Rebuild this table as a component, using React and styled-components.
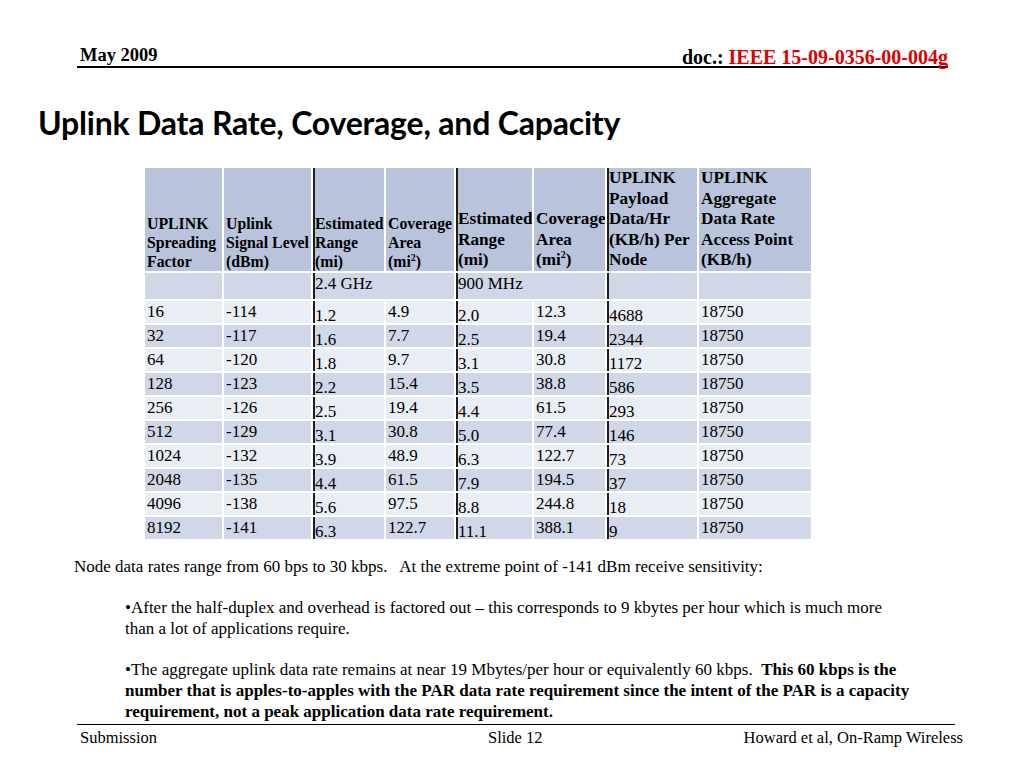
import React from 'react';
import styled, { createGlobalStyle } from 'styled-components';

const GlobalStyle = createGlobalStyle`
  html, body {
    margin: 0;
    padding: 0;
    background: #ffffff;
  }
  body {
    font-family: "Liberation Serif", "Times New Roman", serif;
    color: #000;
  }
`;

const Slide = styled.div`
  width: 1024px;
  height: 768px;
  display: flex;
  flex-direction: column;
  background: #fff;
  overflow: hidden;
`;

const Header = styled.header`
  margin: 0 76px 0 77px;
  padding-top: 40px;
  height: 26px;
  display: flex;
  justify-content: space-between;
  align-items: flex-end;
  border-bottom: 2px solid #000;
  font-weight: bold;
  line-height: 20px;
`;

const HeaderDate = styled.div`
  font-size: 18.5px;
  margin-left: 3px;
  margin-bottom: 1px;
`;

const DocId = styled.div`
  font-size: 20px;
  margin-bottom: -1px;
`;

const Red = styled.span`
  color: #e00000;
`;

const Title = styled.h1`
  margin: 37px 0 0 38px;
  font-family: Lato, "Open Sans", sans-serif;
  font-weight: bold;
  font-size: 32px;
  line-height: 36px;
  letter-spacing: -0.2px;
`;

const Table = styled.table`
  margin: 25px 0 0 143px;
  border-collapse: separate;
  border-spacing: 2px;
  table-layout: fixed;
  width: 670px;
  font-size: 17px;
  line-height: 18px;
`;

const HeadCell = styled.th`
  height: 101px;
  padding: 0 0 0 2px;
  text-align: left;
  vertical-align: bottom;
  white-space: nowrap;
  background: #b9c4dc;
  font-size: ${(p) => (p.$big ? '17.2px' : '15.8px')};
  line-height: ${(p) => (p.$big ? '20.5px' : '19px')};
  box-shadow: ${(p) => (p.$bar ? 'inset 2px 0 0 #1e1e1e' : 'none')};
  overflow: hidden;
`;

const Sup = styled.sup`
  font-size: 10px;
  line-height: 0;
`;

const FreqCell = styled.td`
  height: 26px;
  box-sizing: border-box;
  padding: 2px 0 0 2px;
  vertical-align: top;
  background: #d0d8e8;
  box-shadow: ${(p) => (p.$bar ? 'inset 2px 0 0 #1e1e1e' : 'none')};
`;

const Cell = styled.td`
  height: 22px;
  box-sizing: border-box;
  padding: 2px 0 0 2px;
  vertical-align: top;
  background: ${(p) => (p.$dark ? '#d0d8e8' : '#e9edf4')};
  box-shadow: ${(p) => (p.$bar ? 'inset 2px 0 0 #1e1e1e' : 'none')};
  white-space: nowrap;
`;

const Lowered = styled.span`
  position: relative;
  top: 4px;
`;

const Notes = styled.div`
  margin-top: 15px;
  font-size: 17px;
  line-height: 21px;
`;

const Lead = styled.p`
  margin: 0 0 0 74px;
  white-space: nowrap;
`;

const Bullet = styled.p`
  margin: 20px 0 0 125px;
  white-space: nowrap;
`;

const Footer = styled.footer`
  margin: auto 69px 0 77px;
  padding-top: 3px;
  box-sizing: border-box;
  height: 44px;
  border-top: 1.5px solid #000;
  display: grid;
  grid-template-columns: 411px auto 1fr;
  font-size: 16.5px;
  line-height: 19px;
`;

const FootLeft = styled.div`
  padding-left: 3px;
`;

const FootCenter = styled.div``;

const FootRight = styled.div`
  text-align: right;
  margin-right: -8px;
`;

const widths = [77, 87, 71, 68, 76, 71, 90, 112];

const rows = [
  ['16', '-114', '1.2', '4.9', '2.0', '12.3', '4688', '18750'],
  ['32', '-117', '1.6', '7.7', '2.5', '19.4', '2344', '18750'],
  ['64', '-120', '1.8', '9.7', '3.1', '30.8', '1172', '18750'],
  ['128', '-123', '2.2', '15.4', '3.5', '38.8', '586', '18750'],
  ['256', '-126', '2.5', '19.4', '4.4', '61.5', '293', '18750'],
  ['512', '-129', '3.1', '30.8', '5.0', '77.4', '146', '18750'],
  ['1024', '-132', '3.9', '48.9', '6.3', '122.7', '73', '18750'],
  ['2048', '-135', '4.4', '61.5', '7.9', '194.5', '37', '18750'],
  ['4096', '-138', '5.6', '97.5', '8.8', '244.8', '18', '18750'],
  ['8192', '-141', '6.3', '122.7', '11.1', '388.1', '9', '18750'],
];

const barCols = [2, 4, 6];

export default function App() {
  return (
    <Slide>
      <GlobalStyle />
      <Header>
        <HeaderDate>May 2009</HeaderDate>
        <DocId>
          doc.: <Red>IEEE 15-09-0356-00-004g</Red>
        </DocId>
      </Header>

      <Title>Uplink Data Rate, Coverage, and Capacity</Title>

      <Table>
        <colgroup>
          {widths.map((w, i) => (
            <col key={i} style={{ width: w }} />
          ))}
        </colgroup>
        <thead>
          <tr>
            <HeadCell>UPLINK<br />Spreading<br />Factor</HeadCell>
            <HeadCell>Uplink<br />Signal Level<br />(dBm)</HeadCell>
            <HeadCell $bar>Estimated<br />Range<br />(mi)</HeadCell>
            <HeadCell>
              Coverage<br />Area<br />(mi<Sup>2</Sup>)
            </HeadCell>
            <HeadCell $bar $big>Estimated<br />Range<br />(mi)</HeadCell>
            <HeadCell $big>
              Coverage<br />Area<br />(mi<Sup>2</Sup>)
            </HeadCell>
            <HeadCell $bar $big>UPLINK<br />Payload<br />Data/Hr<br />(KB/h) Per<br />Node</HeadCell>
            <HeadCell $big>UPLINK<br />Aggregate<br />Data Rate<br />Access Point<br />(KB/h)</HeadCell>
          </tr>
        </thead>
        <tbody>
          <tr>
            <FreqCell />
            <FreqCell />
            <FreqCell $bar colSpan={2}>2.4 GHz</FreqCell>
            <FreqCell $bar colSpan={2}>900 MHz</FreqCell>
            <FreqCell $bar />
            <FreqCell />
          </tr>
          {rows.map((r, i) => (
            <tr key={r[0]}>
              {r.map((v, j) => {
                const bar = barCols.includes(j);
                return (
                  <Cell key={j} $dark={i % 2 === 1} $bar={bar}>
                    {bar ? <Lowered>{v}</Lowered> : v}
                  </Cell>
                );
              })}
            </tr>
          ))}
        </tbody>
      </Table>

      <Notes>
        <Lead>
          Node data rates range from 60 bps to 30 kbps.&nbsp;&nbsp; At the extreme point of -141 dBm receive sensitivity:
        </Lead>
        <Bullet>
          •After the half-duplex and overhead is factored out – this corresponds to 9 kbytes per hour which is much more
          <br />
          than a lot of applications require.
        </Bullet>
        <Bullet>
          •The aggregate uplink data rate remains at near 19 Mbytes/per hour or equivalently 60 kbps.&nbsp;{' '}
          <b>This 60 kbps is the</b>
          <br />
          <b>number that is apples-to-apples with the PAR data rate requirement since the intent of the PAR is a capacity</b>
          <br />
          <b>requirement, not a peak application data rate requirement.</b>
        </Bullet>
      </Notes>

      <Footer>
        <FootLeft>Submission</FootLeft>
        <FootCenter>Slide 12</FootCenter>
        <FootRight>Howard et al, On-Ramp Wireless</FootRight>
      </Footer>
    </Slide>
  );
}
